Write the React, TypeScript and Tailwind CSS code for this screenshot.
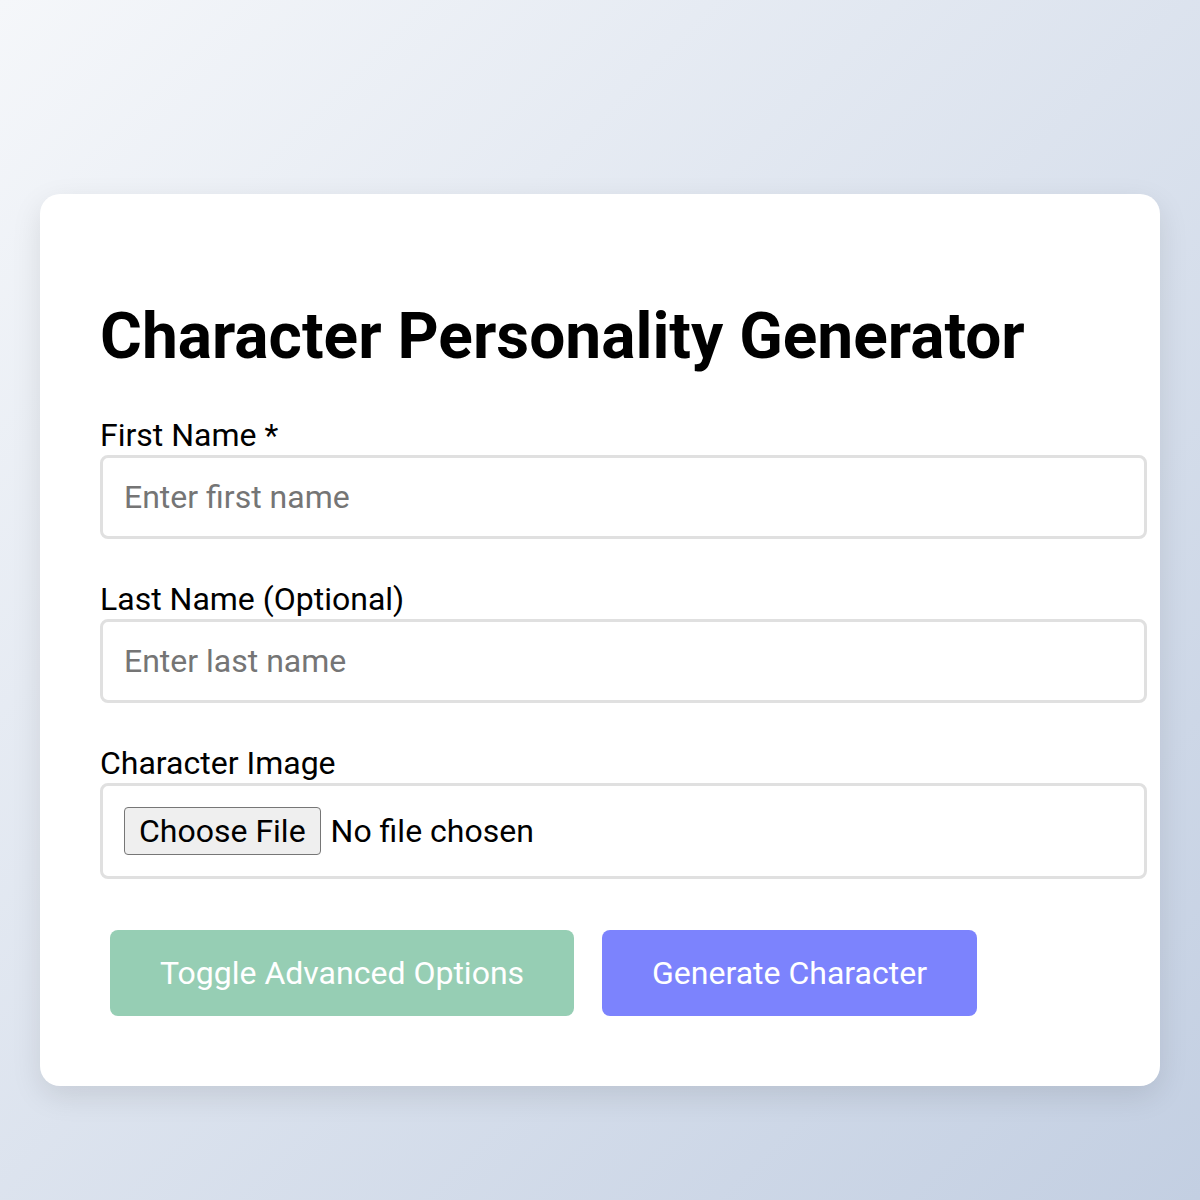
import { useState } from "react";

export default function App() {
  const [firstName, setFirstName] = useState("");
  const [lastName, setLastName] = useState("");
  const [showAdvanced, setShowAdvanced] = useState(false);

  return (
    <div className="min-h-[1200px] w-full bg-gradient-to-br from-[#f5f7fa] to-[#c3cfe2] px-[40px] pt-[194px] pb-[114px] font-['Roboto',sans-serif] text-black">
      <div className="rounded-[20px] bg-white px-[60px] pt-[105px] pb-[70px] shadow-[0_10px_30px_rgba(0,0,0,0.1)]">
        <h1 className="mb-[40px] text-[64px] font-bold leading-[1.2]">Character Personality Generator</h1>

        <label className="mb-[1px] block text-[32px] leading-[38px]">First Name *</label>
        <input
          value={firstName}
          onChange={(e) => setFirstName(e.target.value)}
          placeholder="Enter first name"
          className="block h-[84px] w-[1047px] rounded-[8px] border-[3px] border-[#e0e0e0] px-[21px] text-[32px] outline-none placeholder:text-[#757575]"
        />

        <label className="mt-[41px] mb-[1px] block text-[32px] leading-[38px]">Last Name (Optional)</label>
        <input
          value={lastName}
          onChange={(e) => setLastName(e.target.value)}
          placeholder="Enter last name"
          className="block h-[84px] w-[1047px] rounded-[8px] border-[3px] border-[#e0e0e0] px-[21px] text-[32px] outline-none placeholder:text-[#757575]"
        />

        <label className="mt-[41px] mb-[1px] block text-[32px] leading-[38px]">Character Image</label>
        <label className="flex h-[96px] w-[1047px] cursor-pointer items-center rounded-[8px] border-[3px] border-[#e0e0e0] px-[21px] text-[32px]">
          <span className="flex h-[48px] items-center rounded-[4px] border-[1.5px] border-[#767676] bg-[#efefef] px-[14px]">Choose File</span>
          <span className="ml-[10px]">No file chosen</span>
          <input type="file" accept="image/*" className="hidden" />
        </label>

        {showAdvanced && <div className="hidden" />}

        <div className="mt-[51px] ml-[10px] flex gap-[28px]">
          <button
            onClick={() => setShowAdvanced(!showAdvanced)}
            className="h-[86px] rounded-[8px] bg-[#96ceb4] px-[50px] text-[32px] text-white"
          >
            Toggle Advanced Options
          </button>
          <button className="h-[86px] rounded-[8px] bg-[#7c83fd] px-[50px] text-[32px] text-white">Generate Character</button>
        </div>
      </div>
    </div>
  );
}
